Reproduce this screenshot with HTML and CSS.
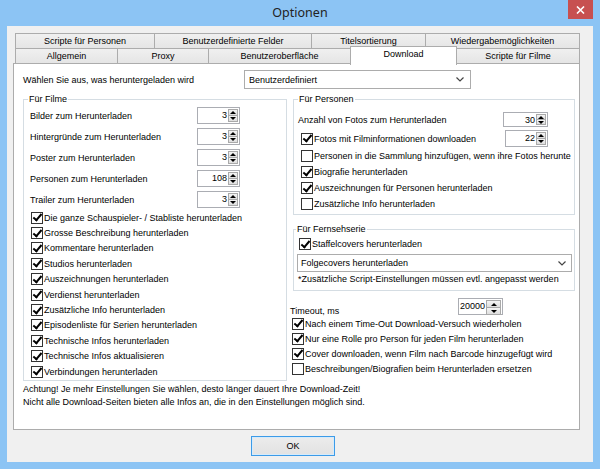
FILE: index.html
```html
<!DOCTYPE html>
<html lang="de">
<head>
<meta charset="utf-8">
<title>Optionen</title>
<link rel="stylesheet" href="styles.css">
</head>
<body>
<div class="window">
  <div class="titlebar">
    <span class="title">Optionen</span>
    <div class="close"><svg width="9" height="8" viewBox="0 0 9 8"><path d="M1 0.5 L8 7.5 M8 0.5 L1 7.5" stroke="#fff" stroke-width="1.6" fill="none"/></svg></div>
  </div>
  <div class="client">
    <div class="tabs">
      <div class="tabrow back">
        <div class="tab t1">Scripte für Personen</div>
        <div class="tab t2">Benutzerdefinierte Felder</div>
        <div class="tab t3">Titelsortierung</div>
        <div class="tab t4">Wiedergabemöglichkeiten</div>
      </div>
      <div class="tabrow front">
        <div class="tab u1">Allgemein</div>
        <div class="tab u2">Proxy</div>
        <div class="tab u3">Benutzeroberfläche</div>
        <div class="tab u4 selected">Download</div>
        <div class="tab u5">Scripte für Filme</div>
      </div>
    </div>
    <div class="panel">
      <div class="toprow">
        <span>Wählen Sie aus, was heruntergeladen wird</span>
        <div class="combo main"><span>Benutzerdefiniert</span><svg width="8" height="5" viewBox="0 0 8 5"><path d="M0.5 0.5 L4 4 L7.5 0.5" stroke="#444" stroke-width="1.2" fill="none"/></svg></div>
      </div>
      <div class="cols">
        <fieldset class="group films">
          <legend>Für Filme</legend>
          <div class="numrow"><span>Bilder zum Herunterladen</span><div class="spin"><span class="val">3</span><span class="arrows"><i class="up"></i><i class="dn"></i></span></div></div>
          <div class="numrow"><span>Hintergründe zum Herunterladen</span><div class="spin"><span class="val">3</span><span class="arrows"><i class="up"></i><i class="dn"></i></span></div></div>
          <div class="numrow"><span>Poster zum Herunterladen</span><div class="spin"><span class="val">3</span><span class="arrows"><i class="up"></i><i class="dn"></i></span></div></div>
          <div class="numrow"><span>Personen zum Herunterladen</span><div class="spin"><span class="val">108</span><span class="arrows"><i class="up"></i><i class="dn"></i></span></div></div>
          <div class="numrow"><span>Trailer zum Herunterladen</span><div class="spin"><span class="val">3</span><span class="arrows"><i class="up"></i><i class="dn"></i></span></div></div>
          <div class="chk on"><span class="box"></span>Die ganze Schauspieler- / Stabliste herunterladen</div>
          <div class="chk on"><span class="box"></span>Grosse Beschreibung herunterladen</div>
          <div class="chk on"><span class="box"></span>Kommentare herunterladen</div>
          <div class="chk on"><span class="box"></span>Studios herunterladen</div>
          <div class="chk on"><span class="box"></span>Auszeichnungen herunterladen</div>
          <div class="chk on"><span class="box"></span>Verdienst herunterladen</div>
          <div class="chk on"><span class="box"></span>Zusätzliche Info herunterladen</div>
          <div class="chk on"><span class="box"></span>Episodenliste für Serien herunterladen</div>
          <div class="chk on"><span class="box"></span>Technische Infos herunterladen</div>
          <div class="chk on"><span class="box"></span>Technische Infos aktualisieren</div>
          <div class="chk on"><span class="box"></span>Verbindungen herunterladen</div>
        </fieldset>
        <div class="rightcol">
          <fieldset class="group persons">
            <legend>Für Personen</legend>
            <div class="prow first"><span>Anzahl von Fotos zum Herunterladen</span><div class="spin short"><span class="val">30</span><span class="arrows"><i class="up"></i><i class="dn"></i></span></div></div>
            <div class="prow second"><div class="chk on"><span class="box"></span>Fotos mit Filminformationen downloaden</div><div class="spin"><span class="val">22</span><span class="arrows"><i class="up"></i><i class="dn"></i></span></div></div>
            <div class="chk"><span class="box"></span>Personen in die Sammlung hinzufügen, wenn ihre Fotos herunte</div>
            <div class="chk on"><span class="box"></span>Biografie herunterladen</div>
            <div class="chk on"><span class="box"></span>Auszeichnungen für Personen herunterladen</div>
            <div class="chk"><span class="box"></span>Zusätzliche Info herunterladen</div>
          </fieldset>
          <fieldset class="group series">
            <legend>Für Fernsehserie</legend>
            <div class="chk on"><span class="box"></span>Staffelcovers herunterladen</div>
            <div class="combo sub"><span>Folgecovers herunterladen</span><svg width="8" height="5" viewBox="0 0 8 5"><path d="M0.5 0.5 L4 4 L7.5 0.5" stroke="#444" stroke-width="1.2" fill="none"/></svg></div>
            <div class="hint">*Zusätzliche Script-Einstellungen müssen evtl. angepasst werden</div>
          </fieldset>
          <div class="timeout">
            <div class="trow"><span>Timeout, ms</span><div class="spin wide"><span class="val">20000</span><span class="arrows"><i class="up"></i><i class="dn"></i></span></div></div>
            <div class="chk on"><span class="box"></span>Nach einem Time-Out Download-Versuch wiederholen</div>
            <div class="chk on"><span class="box"></span>Nur eine Rolle pro Person für jeden Film herunterladen</div>
            <div class="chk on"><span class="box"></span>Cover downloaden, wenn Film nach Barcode hinzugefügt wird</div>
            <div class="chk"><span class="box"></span>Beschreibungen/Biografien beim Herunterladen ersetzen</div>
          </div>
        </div>
      </div>
      <div class="notes">
        <p>Achtung! Je mehr Einstellungen Sie wählen, desto länger dauert Ihre Download-Zeit!</p>
        <p>Nicht alle Download-Seiten bieten alle Infos an, die in den Einstellungen möglich sind.</p>
      </div>
    </div>
    <div class="buttons"><div class="ok">OK</div></div>
  </div>
</div>
</body>
</html>
```
FILE: styles.css
```css
* { box-sizing: border-box; }
html, body { margin: 0; padding: 0; }
body {
  width: 600px; height: 469px; overflow: hidden;
  background: #8cc4f4;
  font-family: "Liberation Sans", Arial, sans-serif;
  font-size: 9px; color: #000;
}
.window { width: 600px; height: 469px; display: flex; flex-direction: column; }

.titlebar {
  height: 26px; flex: none;
  display: grid; grid-template-columns: 1fr auto 1fr;
  padding: 0 7px;
}
.title {
  grid-column: 2; align-self: center;
  font-family: "Noto Sans", "Open Sans", sans-serif;
  font-size: 12.5px; color: #222; line-height: 26px;
}
.close {
  grid-column: 3; justify-self: end; align-self: start;
  width: 25px; height: 19px; background: #c75050;
  display: flex; align-items: center; justify-content: center;
}

.client {
  flex: none; height: 436px; margin: 0 7px;
  background: #f0f0f0;
  padding: 7px 0 0 6px;
  display: flex; flex-direction: column;
}

.tabs { margin-left: 2px; width: 565px; }
.tabrow { display: flex; height: 16px; }
.tabrow.front { margin-top: -1px; }
.tab {
  height: 16px; line-height: 14px; text-align: center;
  border: 1px solid #acacac; margin-right: -1px;
  background: linear-gradient(#f0f0f0, #e5e5e5);
  white-space: nowrap;
}
.t1 { width: 140px; } .t2 { width: 158px; } .t3 { width: 115px; } .t4 { width: 155px; }
.u1 { width: 103px; } .u2 { width: 92px; } .u3 { width: 143px; } .u4 { width: 107px; } .u5 { width: 124px; }
.tab.selected {
  background: #fff; border-bottom: none;
  height: 19px; margin-top: -2px; line-height: 14px;
  position: relative; z-index: 2;
}

.panel {
  width: 567px; height: 367px; margin-top: -1px;
  background: #fff; border: 1px solid #acacac;
  padding: 6px 4px 0 9px;
  position: relative; z-index: 1;
}
.toprow {
  display: grid; grid-template-columns: 221px 227px;
  align-items: center; height: 19px;
}
.combo {
  display: flex; align-items: center; justify-content: space-between;
  border: 1px solid #acacac; background: #fff;
  padding: 0 6px 0 4px;
}
.combo.main { height: 19px; }
.combo.sub { height: 18px; margin-top: 2px; padding-left: 3px; padding-right: 5px; }

.cols {
  display: grid; grid-template-columns: 264px 282px; column-gap: 6px;
  margin-top: 4px; align-items: start;
}
.group {
  margin: 0; border: 1px solid #d5dde3; min-width: 0;
}
.group legend {
  padding: 0 1px; line-height: 12px;
}
.films { padding: 0 46px 0 6px; height: 288px; }
.films legend { margin-left: -2px; }

.numrow {
  display: flex; align-items: center; justify-content: space-between;
  height: 21px;
}
.spin {
  width: 43px; height: 17px; flex: none;
  border: 1px solid #abadb3; background: #fff;
  display: flex; padding: 1px;
}
.spin.short { height: 15px; width: 45px; }
.spin.wide { width: 45px; }
.spin .val { flex: 1; text-align: right; line-height: 13px; padding-right: 1px; }
.arrows { width: 10px; display: flex; flex-direction: column; }
.arrows i {
  flex: 1; border: 1px solid #a9a9a9;
  background: linear-gradient(#f4f4f4, #dedede);
  display: flex; align-items: center; justify-content: center;
}
.arrows i + i { margin-top: -1px; }
.arrows i::after {
  content: ""; width: 0; height: 0;
  border-left: 3px solid transparent; border-right: 3px solid transparent;
}
.arrows .up::after { border-bottom: 3px solid #000; }
.arrows .dn::after { border-top: 3px solid #000; }

.chk {
  display: flex; align-items: center; height: 15.4px;
  white-space: nowrap; margin-left: 1px;
}
.box {
  width: 12px; height: 12px; flex: none; margin-right: 1px;
  border: 1px solid #333; background: #fff;
  display: flex; align-items: center; justify-content: center;
}
.chk.on .box::after {
  content: ""; width: 3px; height: 7px;
  border: solid #000; border-width: 0 2px 2px 0;
  transform: translate(0, -1px) rotate(40deg);
}

.rightcol { display: flex; flex-direction: column; }
.persons { padding: 4px 26px 2px 4px; }
.persons legend { margin-left: 0; }
.persons .chk { height: 16px; margin-left: 3px; }
.prow { display: flex; align-items: center; justify-content: space-between; }
.prow.first { height: 20px; padding-top: 1px; }
.prow.second { height: 19px; }
.prow.second .chk { margin-left: 3px; }

.series { margin-top: 8px; padding: 1px 2px 3px 3px; }
.series legend { margin-left: -1px; }
.series .chk { height: 16px; margin-left: 2px; }
.hint { line-height: 15px; margin-left: 1px; }

.timeout { margin-left: -3px; margin-top: 6px; }
.trow { display: flex; align-items: flex-end; height: 18px; }
.trow span { width: 168px; line-height: 12px; margin-bottom: -2px; }
.timeout .chk { height: 15px; margin-left: 2px; }
.timeout .trow + .chk { margin-top: 1px; }

.notes { margin-top: 2px; }
.notes p { margin: 0; line-height: 13px; }

.buttons { padding: 6px 0 0 238px; }
.ok {
  width: 84px; height: 20px; line-height: 18px; text-align: center;
  border: 1px solid #3c9be8;
  background: linear-gradient(#ececec, #e2e2e2);
  box-shadow: inset 0 0 0 1px #d6ebfb;
}
```
